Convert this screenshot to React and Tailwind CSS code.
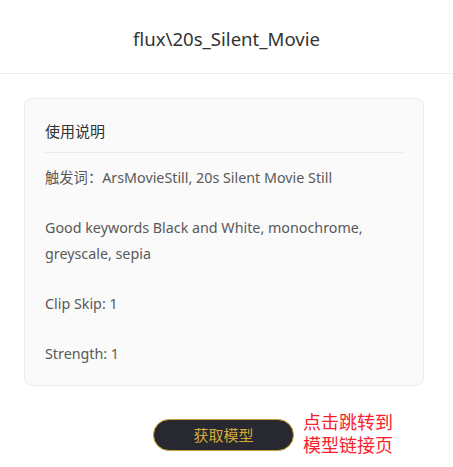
export default function App() {
  const font = { fontFamily: '"Noto Sans", "Noto Sans CJK SC", sans-serif' };
  return (
    <div className="w-[453px] h-[467px] bg-white" style={font}>
      <div className="h-[74px] border-b border-[#ededed] flex items-center justify-center">
        <span className="text-[18.6px] text-[#333] leading-none mt-[6px]">flux\20s_Silent_Movie</span>
      </div>
      <div className="px-[24px] pt-[24px]">
        <div className="w-[400px] h-[288px] rounded-[8px] border border-[#ececec] bg-[#fafafa] px-[20px] pt-[20px]">
          <div className="text-[15px] text-[#333] leading-[24px] pb-[9px] border-b border-[#ebebeb]">使用说明</div>
          <div className="text-[14.3px] text-[#595959] leading-[26px] pt-[12px]">
            <p>触发词：ArsMovieStill, 20s Silent Movie Still</p>
            <p className="mt-[24px]">Good keywords Black and White, monochrome, greyscale, sepia</p>
            <p className="mt-[24px]">Clip Skip: 1</p>
            <p className="mt-[24px]">Strength: 1</p>
          </div>
        </div>
      </div>
      <div className="flex items-start pl-[153px] mt-[30px]">
        <div className="mt-[3px] w-[141px] h-[32px] rounded-full bg-[#272830] border border-[#c9a235] flex items-center justify-center text-[15px] text-[#d4aa3a]">
          获取模型
        </div>
        <div className="ml-[9px] text-[18px] leading-[23px] text-[#f5222d] -mt-[5px]">
          点击跳转到<br />模型链接页
        </div>
      </div>
    </div>
  );
}
